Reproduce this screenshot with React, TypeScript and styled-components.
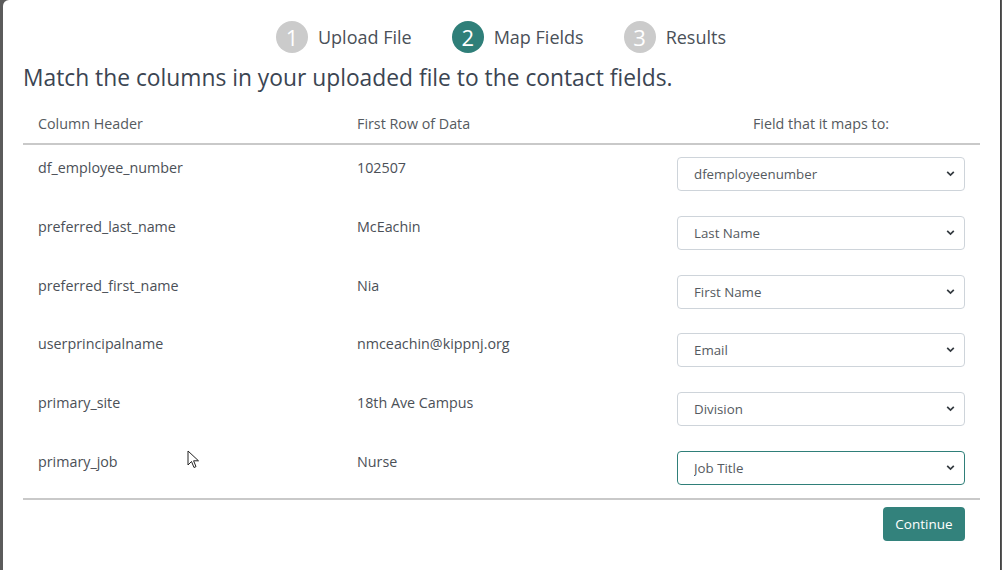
import React from "react";
import styled, { createGlobalStyle } from "styled-components";

const GlobalStyle = createGlobalStyle`
    html, body {
        margin: 0;
        padding: 0;
        background: #5b5b5b;
        font-family: "Open Sans", "Noto Sans", sans-serif;
    }
`;

const Backdrop = styled.div`
    width: 1002px;
    height: 570px;
    display: flex;
    padding-left: 3px;
    box-sizing: border-box;
    overflow: hidden;
    position: relative;
`;

const Modal = styled.div`
    width: 998px;
    height: 580px;
    background: #fff;
    border-top-left-radius: 6px;
    border-right: 1px solid #444;
    box-sizing: border-box;
    padding: 21px 21px 0 20px;
    display: flex;
    flex-direction: column;
`;

const Steps = styled.div`
    display: flex;
    justify-content: center;
    gap: 40px;
`;

const Step = styled.div`
    display: flex;
    align-items: center;
    gap: 10px;
    font-size: 18px;
    color: #4a5058;
`;

const StepNum = styled.div<{ $active?: boolean }>`
    width: 32px;
    height: 32px;
    border-radius: 50%;
    background: ${(p) => (p.$active ? "#2f7f79" : "#cbcbcb")};
    color: #fff;
    font-size: 22px;
    display: flex;
    align-items: center;
    justify-content: center;
`;

const Heading = styled.h2`
    margin: 9px 0 0;
    font-weight: 400;
    font-size: 22.8px;
    color: #3b4552;
`;

const Table = styled.div`
    margin-top: 10px;
    width: 957px;
    display: flex;
    flex-direction: column;
`;

const HeadRow = styled.div`
    display: grid;
    grid-template-columns: 319px 320px 318px;
    height: 40px;
    align-items: center;
    border-bottom: 2px solid #c9c9c9;
    font-size: 14.3px;
    color: #555a60;
`;

const HeadCell = styled.div<{ $center?: boolean }>`
    padding: 0 15px;
    text-align: ${(p) => (p.$center ? "center" : "left")};
`;

const Row = styled.div`
    display: grid;
    grid-template-columns: 319px 320px 318px;
    height: 58.8px;
    font-size: 14.3px;
    color: #4b5057;
`;

const Cell = styled.div`
    padding: 13px 15px 0;
`;

const SelectCell = styled.div`
    padding: 12px 15px 0;
    position: relative;
`;

const Select = styled.select<{ $focus?: boolean }>`
    appearance: none;
    width: 100%;
    height: 34px;
    border: 1px solid ${(p) => (p.$focus ? "#2f7f79" : "#ced4da")};
    border-radius: 4px;
    background: #fff;
    padding: 0 30px 0 16px;
    font-family: inherit;
    font-size: 13.3px;
    color: #555a60;
    outline: none;
`;

const Chevron = styled.svg`
    position: absolute;
    right: 25px;
    top: 25px;
    pointer-events: none;
`;

const Footer = styled.div`
    border-top: 2px solid #c9c9c9;
    width: 957px;
    display: flex;
    justify-content: flex-end;
    padding: 7px 15px 0 0;
    box-sizing: border-box;
`;

const ContinueButton = styled.button`
    width: 82px;
    height: 34px;
    border: none;
    border-radius: 4px;
    background: #33827c;
    color: #fff;
    font-family: inherit;
    font-size: 13.5px;
`;

const Cursor = styled.svg`
    position: absolute;
    left: 187px;
    top: 450px;
`;

const rows = [
    { header: "df_employee_number", value: "102507", field: "dfemployeenumber" },
    { header: "preferred_last_name", value: "McEachin", field: "Last Name" },
    { header: "preferred_first_name", value: "Nia", field: "First Name" },
    { header: "userprincipalname", value: "nmceachin@kippnj.org", field: "Email" },
    { header: "primary_site", value: "18th Ave Campus", field: "Division" },
    { header: "primary_job", value: "Nurse", field: "Job Title" },
];

const App = () => {
    return (
        <Backdrop>
            <GlobalStyle />
            <Modal>
                <Steps>
                    <Step><StepNum>1</StepNum>Upload File</Step>
                    <Step><StepNum $active>2</StepNum>Map Fields</Step>
                    <Step><StepNum>3</StepNum>Results</Step>
                </Steps>
                <Heading>Match the columns in your uploaded file to the contact fields.</Heading>
                <Table>
                    <HeadRow>
                        <HeadCell>Column Header</HeadCell>
                        <HeadCell>First Row of Data</HeadCell>
                        <HeadCell $center>Field that it maps to:</HeadCell>
                    </HeadRow>
                    {rows.map((r, i) => (
                        <Row key={r.header}>
                            <Cell>{r.header}</Cell>
                            <Cell>{r.value}</Cell>
                            <SelectCell>
                                <Select $focus={i === rows.length - 1} defaultValue={r.field}>
                                    <option>{r.field}</option>
                                </Select>
                                <Chevron width="9" height="7" viewBox="0 0 9 7">
                                    <path d="M1.2 1.8 L4.5 5 L7.8 1.8" fill="none" stroke="#343a40" strokeWidth="1.7" />
                                </Chevron>
                            </SelectCell>
                        </Row>
                    ))}
                </Table>
                <Footer>
                    <ContinueButton>Continue</ContinueButton>
                </Footer>
            </Modal>
            <Cursor width="14" height="20" viewBox="0 0 14 20">
                <path d="M1 1 L1 15 L4.5 11.5 L7 17.5 L9 16.6 L6.6 10.8 L11.5 10.8 Z" fill="#fff" stroke="#222" strokeWidth="1" />
            </Cursor>
        </Backdrop>
    );
};

export default App;
